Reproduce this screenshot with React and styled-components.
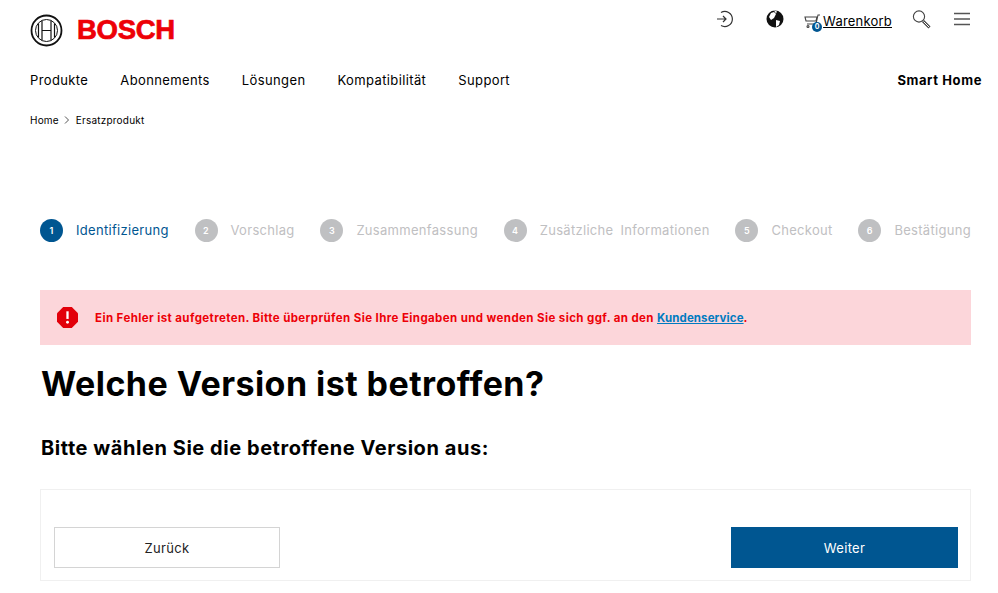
import React from 'react';
import styled, { createGlobalStyle } from 'styled-components';

const Global = createGlobalStyle`
  html, body { margin: 0; padding: 0; background: #fff; }
  body { font-family: Inter, "Noto Sans", "Liberation Sans", sans-serif; color: #000; overflow: hidden; }
  * { box-sizing: border-box; }
`;
const Page = styled.div`width: 998px; height: 593px; overflow: hidden; background: #fff;`;
const Header = styled.header`padding: 0 16px 0 30px;`;
const TopBar = styled.div`display: flex; justify-content: space-between; height: 60px;`;
const Logo = styled.div`display: flex; align-items: center; gap: 14px; height: 60px;`;
const Wordmark = styled.span`font-family: "Liberation Sans", sans-serif; font-weight: 700; font-size: 27.5px; color: #ed0007; letter-spacing: -0.3px; -webkit-text-stroke: 0.7px #ed0007;`;
const Tools = styled.div`display: flex; align-items: flex-start; padding-top: 9px;`;
const ToolIcon = styled.div`display: flex; width: ${p => p.$w}px; height: 20px; margin-right: ${p => p.$mr}px;`;
const CartWrap = styled.div`position: relative; display: flex; width: 19px; height: 20px; margin: 5px 0 0 0;`;
const CartBadge = styled.span`position: absolute; left: 8px; top: 8px; width: 10px; height: 10px; border-radius: 50%; background: #005691; color: #fff; font-size: 7px; line-height: 10px; text-align: center; font-weight: 700;`;
const CartLink = styled.a`font-size: 13px; line-height: 24px; color: #000; text-decoration: underline; margin: 0 20px 0 0; letter-spacing: 0.2px;`;
const Nav = styled.nav`display: flex; justify-content: space-between; align-items: center; height: 39px;`;
const NavList = styled.div`display: flex; gap: 32px;`;
const NavItem = styled.a`font-size: 13px; letter-spacing: 0.38px; color: #000;`;
const Brand = styled.span`font-size: 13px; font-weight: 700; letter-spacing: 0.6px;`;
const Crumbs = styled.div`display: flex; align-items: center; gap: 5.5px; font-size: 10px; letter-spacing: 0.2px; height: 20px; margin-top: 11px;`;
const Main = styled.main`padding: 0 27px 0 40px;`;
const Stepper = styled.ol`list-style: none; margin: 82px 0 0; padding: 0; height: 36px; display: flex; justify-content: space-between; align-items: center;`;
const Step = styled.li`display: flex; align-items: center; gap: 13px; font-size: 13px; letter-spacing: 0.3px; word-spacing: 3px; color: ${p => p.$active ? '#005691' : '#bfc0c2'};`;
const Dot = styled.span`width: 23px; height: 23px; border-radius: 50%; background: ${p => p.$active ? '#005691' : '#bfc0c2'}; color: #fff; font-size: 9px; font-weight: 600; display: flex; align-items: center; justify-content: center;`;
const Alert = styled.div`margin-top: 42px; height: 55px; background: #fcd6da; display: flex; align-items: center; padding-left: 17px; gap: 17px; font-size: 11.5px; font-weight: 700; color: #ed0007; letter-spacing: 0.4px;`;
const AlertLink = styled.a`color: #007bc0; text-decoration: underline; letter-spacing: 0.1px;`;
const Title = styled.h1`margin: 16px 0 0 1px; font-size: 34px; line-height: 46px; font-weight: 700; color: #000; letter-spacing: 0.45px;`;
const Subtitle = styled.h2`margin: 27px 0 0 1px; font-size: 20px; line-height: 28px; font-weight: 700; letter-spacing: 0.55px;`;
const ActionCard = styled.div`margin-top: 27px; height: 92px; border: 1px solid #f0f0f0; padding: 37px 12px 13px 13px; display: flex; justify-content: space-between;`;
const Button = styled.button`width: ${p => p.$primary ? 227 : 226}px; height: 41px; font-family: inherit; font-size: 13px; letter-spacing: 0.35px; border: ${p => p.$primary ? '0' : '1px solid #d4d4d4'}; background: ${p => p.$primary ? '#005691' : '#fff'}; color: ${p => p.$primary ? '#fff' : '#222'};`;

const steps = ['Identifizierung','Vorschlag','Zusammenfassung','Zusätzliche Informationen','Checkout','Bestätigung'];
const navs = ['Produkte','Abonnements','Lösungen','Kompatibilität','Support'];

const BoschMark = () => (
  <svg width="33" height="33" viewBox="0 0 33 33" fill="none" stroke="#111">
    <circle cx="16.5" cy="16.5" r="15" strokeWidth="1.8" />
    <circle cx="16.5" cy="16.5" r="11" strokeWidth="1" />
    <path d="M8.5 9.5v14M12 6.5v20M21 6.5v20M24.5 9.5v14M12 16.5h9" strokeWidth="1.2" />
  </svg>
);

export default function App() {
  return (
    <Page>
      <Global />
      <Header>
        <TopBar>
          <Logo><BoschMark /><Wordmark>BOSCH</Wordmark></Logo>
          <Tools>
            <ToolIcon $w={20} $mr={30}>
              <svg width="20" height="20" viewBox="0 0 20 20" fill="none" stroke="#333" strokeWidth="1.2"><path d="M6 3.4a7.6 7.6 0 1 1 0 13.2M2 10h9M8 7l3 3-3 3"/></svg>
            </ToolIcon>
            <ToolIcon $w={20} $mr={19}>
              <svg width="20" height="20" viewBox="0 0 20 20"><circle cx="10" cy="10" r="8.5" fill="#111"/><path d="M6 4l3-1 2 2-2 4-3 2-2-3zM9 1.5l3 1-1 2zM11 11l4 1-1 4-3 2z" fill="#fff"/></svg>
            </ToolIcon>
            <CartWrap>
              <svg width="17" height="15" viewBox="0 0 17 15" fill="none" stroke="#444" strokeWidth="1.1"><path d="M16 1h-2l-2 9H3M1 3h12l-1 4H2z"/><circle cx="4" cy="12.5" r="1"/></svg>
              <CartBadge>0</CartBadge>
            </CartWrap>
            <CartLink>Warenkorb</CartLink>
            <ToolIcon $w={20} $mr={22}>
              <svg width="20" height="20" viewBox="0 0 20 20" fill="none" stroke="#444" strokeWidth="1.1"><circle cx="7" cy="7.5" r="5.6"/><path d="M11 12l6.5 6.5" strokeWidth="3"/><path d="M11.5 12.5l5.5 5.5" stroke="#fff" strokeWidth="1"/></svg>
            </ToolIcon>
            <ToolIcon $w={16} $mr={12}>
              <svg width="16" height="20" viewBox="0 0 16 20" stroke="#555" strokeWidth="1.4"><path d="M0 4.5h16M0 10h16M0 15.5h16"/></svg>
            </ToolIcon>
          </Tools>
        </TopBar>
        <Nav>
          <NavList>{navs.map(n => <NavItem key={n}>{n}</NavItem>)}</NavList>
          <Brand>Smart Home</Brand>
        </Nav>
        <Crumbs>Home
          <svg width="6" height="8" viewBox="0 0 6 8" fill="none" stroke="#555"><path d="M1 0.5l3.5 3.5L1 7.5"/></svg>
          Ersatzprodukt</Crumbs>
      </Header>
      <Main>
        <Stepper>
          {steps.map((s, i) => <Step key={s} $active={i === 0}><Dot $active={i === 0}>{i + 1}</Dot>{s}</Step>)}
        </Stepper>
        <Alert>
          <svg width="21" height="21" viewBox="0 0 22 22"><path d="M6.5 0h9L22 6.5v9L15.5 22h-9L0 15.5v-9z" fill="#e2000a"/><path d="M11 4.5v8" stroke="#fff" strokeWidth="2.4"/><circle cx="11" cy="16" r="1.5" fill="#fff"/></svg>
          <span>Ein Fehler ist aufgetreten. Bitte überprüfen Sie Ihre Eingaben und wenden Sie sich ggf. an den <AlertLink>Kundenservice</AlertLink>.</span>
        </Alert>
        <Title>Welche Version ist betroffen?</Title>
        <Subtitle>Bitte wählen Sie die betroffene Version aus:</Subtitle>
        <ActionCard>
          <Button>Zurück</Button>
          <Button $primary>Weiter</Button>
        </ActionCard>
      </Main>
    </Page>
  );
}
